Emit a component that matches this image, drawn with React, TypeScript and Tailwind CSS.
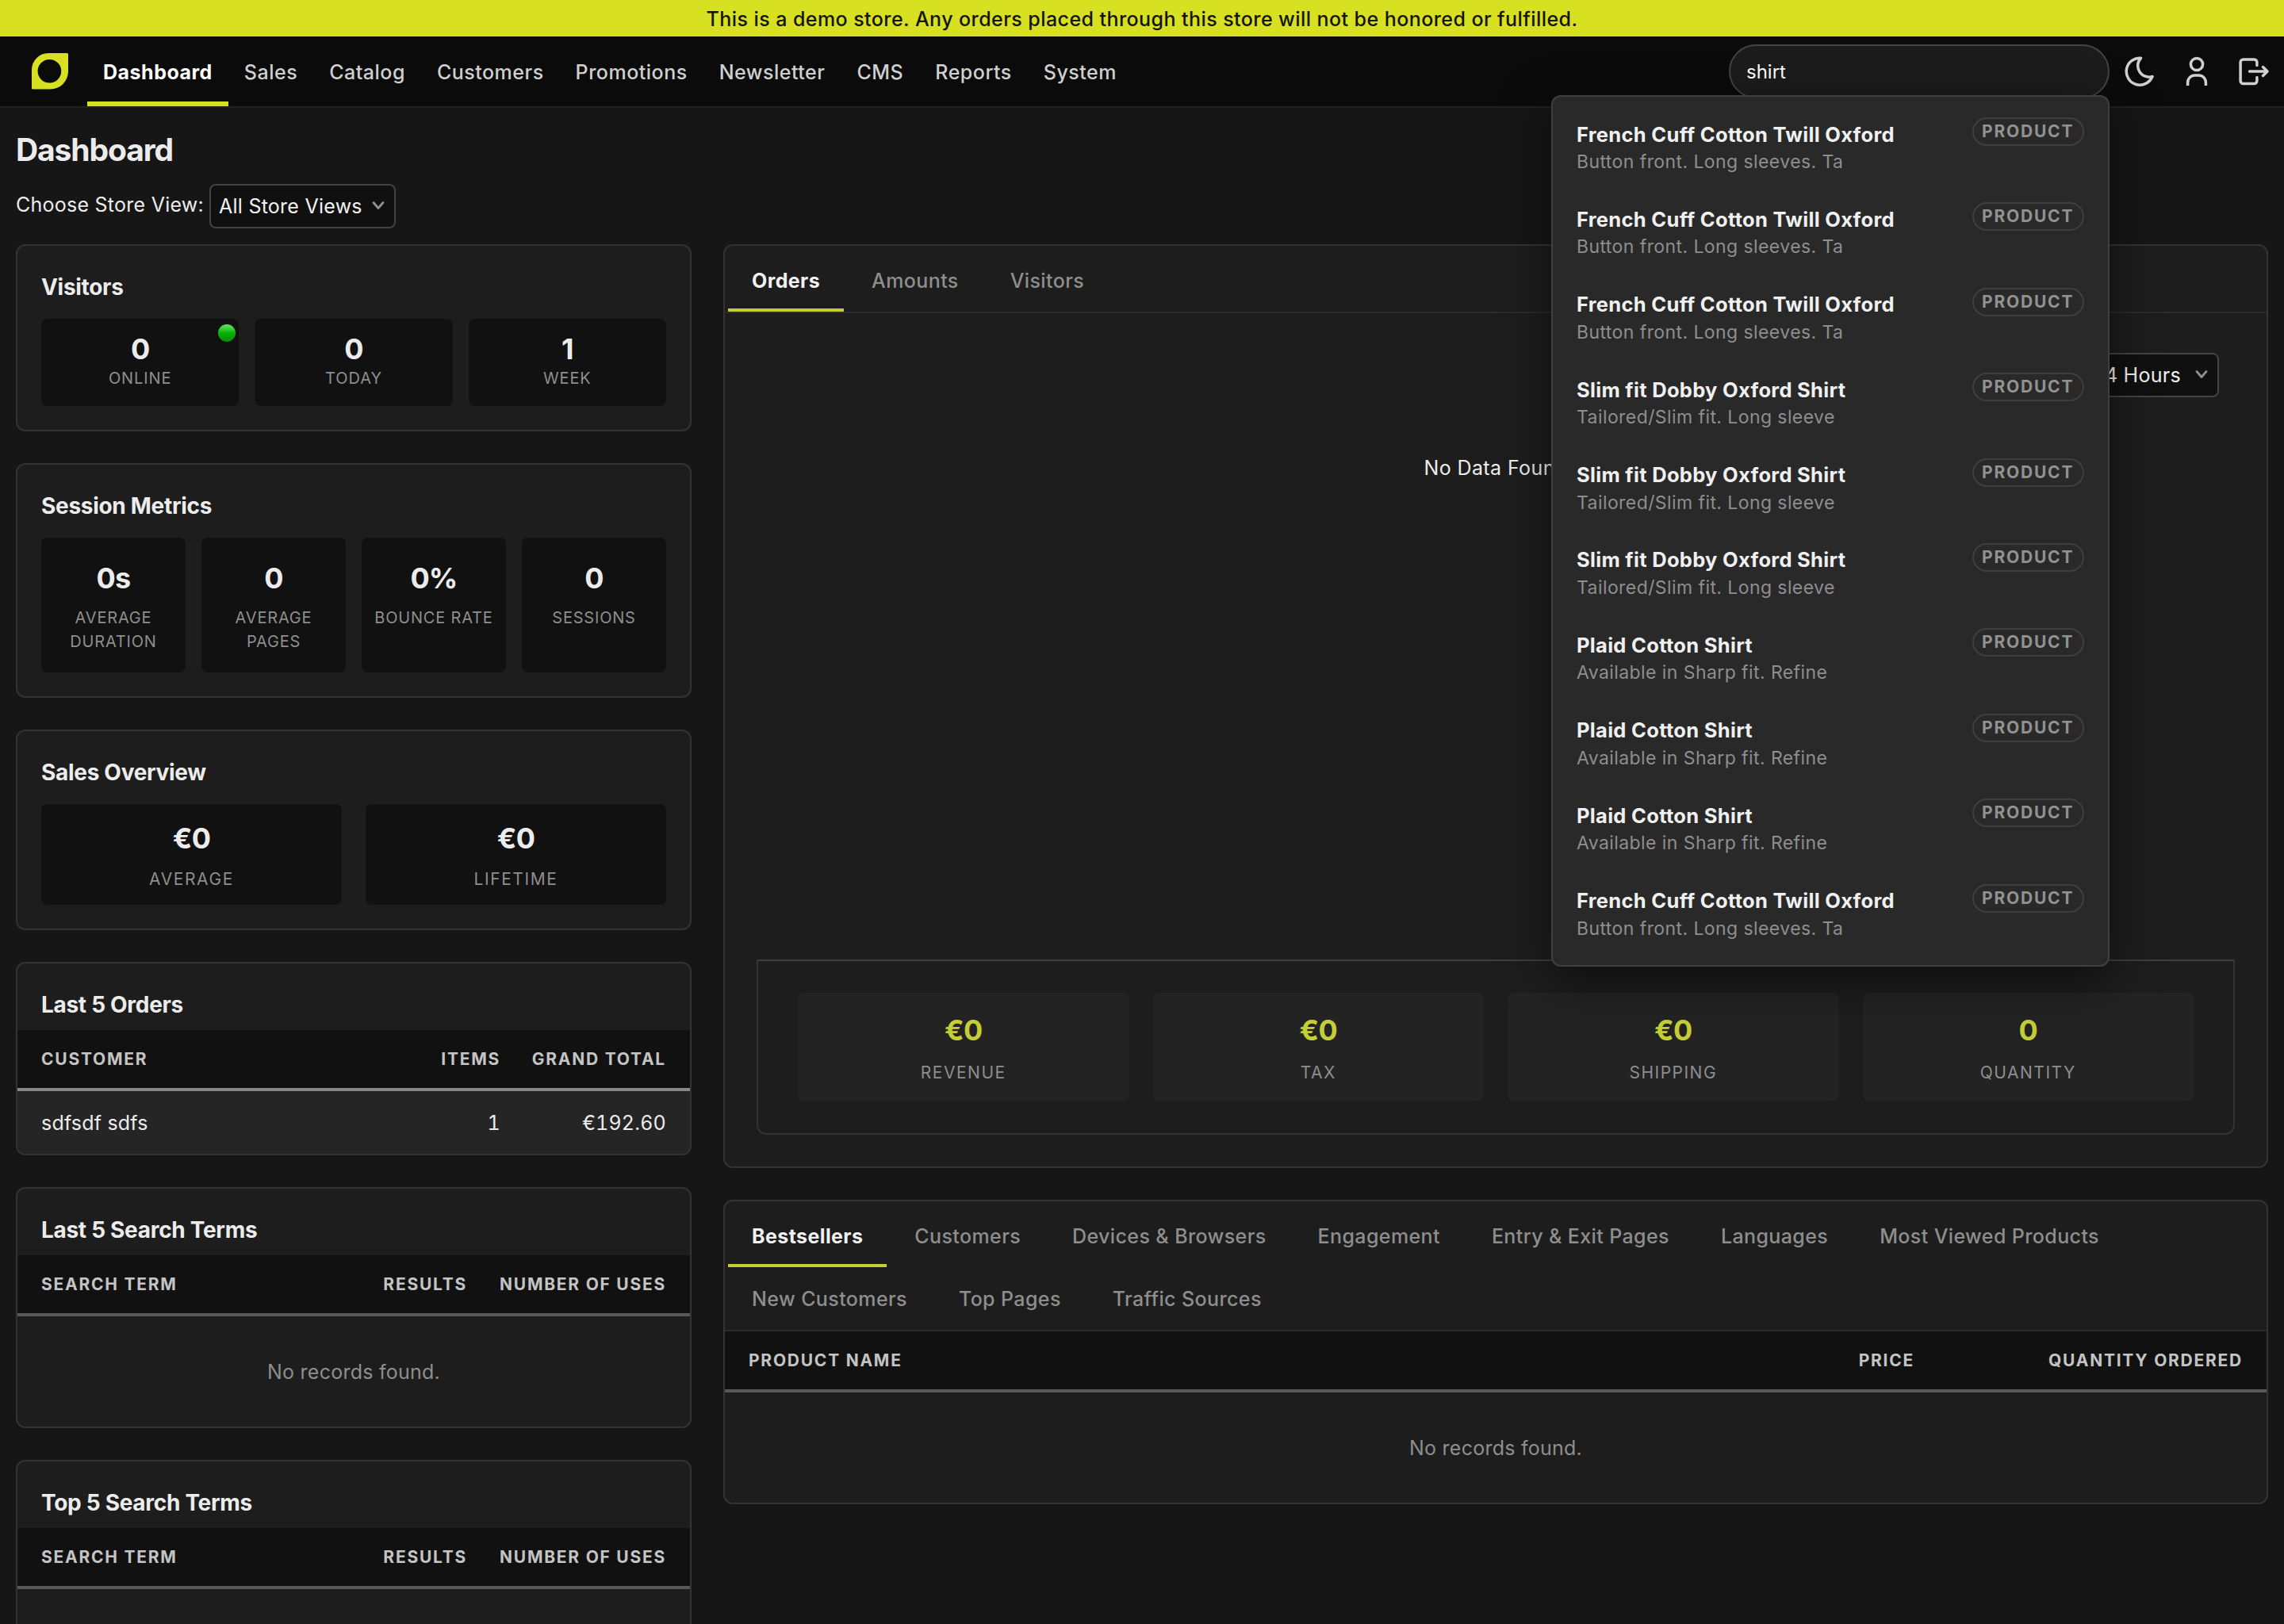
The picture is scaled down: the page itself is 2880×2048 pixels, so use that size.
import { clsx } from "clsx";

const NAV_ITEMS = ["Dashboard", "Sales", "Catalog", "Customers", "Promotions", "Newsletter", "CMS", "Reports", "System"];

const PRODUCTS = {
  oxford: { name: "French Cuff Cotton Twill Oxford", text: "Button front. Long sleeves. Ta" },
  dobby: { name: "Slim fit Dobby Oxford Shirt", text: "Tailored/Slim fit. Long sleeve" },
  plaid: { name: "Plaid Cotton Shirt", text: "Available in Sharp fit. Refine" },
};

const RESULTS = [
  PRODUCTS.oxford,
  PRODUCTS.oxford,
  PRODUCTS.oxford,
  PRODUCTS.dobby,
  PRODUCTS.dobby,
  PRODUCTS.dobby,
  PRODUCTS.plaid,
  PRODUCTS.plaid,
  PRODUCTS.plaid,
  PRODUCTS.oxford,
];

const REPORT_TABS = [
  ["Bestsellers", "Customers", "Devices & Browsers", "Engagement", "Entry & Exit Pages", "Languages", "Most Viewed Products"],
  ["New Customers", "Top Pages", "Traffic Sources"],
];

function Logo() {
  return (
    <svg width="46" height="46" viewBox="0 0 46 46" className="shrink-0">
      <path
        fill="#d7e021"
        fillRule="evenodd"
        d="M21 0H44.500Q46 0 46 1.500V23A22.500 22.500 0 0 1 23.500 45.500H1.500Q0 45.500 0 44V21A21 21 0 0 1 21 0ZM22.400 8A14.800 14.800 0 1 0 22.400 37.600A14.800 14.800 0 1 0 22.400 8Z"
      />
    </svg>
  );
}

function MoonIcon() {
  return (
    <svg width="40" height="40" viewBox="0 0 40 40" fill="none" stroke="#d0d0d0" strokeWidth="3.500" strokeLinejoin="round">
      <path d="M21.500 3.200A17 17 0 1 0 36 26.500A14.200 14.200 0 0 1 21.500 3.200Z" />
    </svg>
  );
}

function UserIcon() {
  return (
    <svg width="40" height="40" viewBox="0 0 40 40" fill="none" stroke="#d0d0d0" strokeWidth="3.500">
      <circle cx="20" cy="11" r="7.600" />
      <path d="M8.600 38V34a9 9 0 0 1 9-9h4.800a9 9 0 0 1 9 9v4" />
    </svg>
  );
}

function LogoutIcon() {
  return (
    <svg width="44" height="40" viewBox="0 0 44 40" fill="none" stroke="#d0d0d0" strokeWidth="3.500" strokeLinecap="round" strokeLinejoin="round">
      <path d="M25.900 12.400V8.500a3.500 3.500 0 0 0-3.500-3.500H8.600a3.500 3.500 0 0 0-3.500 3.500V32a3.500 3.500 0 0 0 3.500 3.500h13.800a3.500 3.500 0 0 0 3.500-3.500v-4.400" />
      <path d="M16.500 20H38.500M33.500 14.500 39 20 33.500 25.500" />
    </svg>
  );
}

function Select({ value, className }: { value: string; className?: string }) {
  return (
    <div
      className={clsx(
        "flex h-14 items-center justify-between rounded-lg border-2 border-[#444] bg-[#101010] pl-2.5 pr-[12px] text-[25px] tracking-[0.250px] text-[#f2f2f2]",
        className,
      )}
    >
      <span className="pt-px leading-[51px]">{value}</span>
      <svg width="16" height="12" viewBox="0 0 16 12" className="-mt-0.5" fill="none" stroke="#8f8f8f" strokeWidth="2.800" strokeLinecap="round" strokeLinejoin="round">
        <path d="M2 2.500 8 9.500 14 2.500" />
      </svg>
    </div>
  );
}

function SearchResults() {
  return (
    <div className="absolute right-0 top-16 z-10 h-[1099px] w-[704px] rounded-xl border-2 border-[#3f3f3f] bg-[#292929] px-[30px] pt-[26px] shadow-[0_16px_60px_rgba(0,0,0,0.5)]">
      {RESULTS.map((item, i) => (
        <div key={i} className="flex h-[107.400px] items-start justify-between">
          <div>
            <div className="mt-[3.500px] text-[25.500px] font-[650] leading-9 tracking-[0.300px] text-[#f0f0f0]">{item.name}</div>
            <div className="mt-[1.500px] text-[23px] leading-[30px] tracking-[0.420px] text-[#8e8e8e]">{item.text}</div>
          </div>
          <span className="h-9 w-[141px] rounded-full border-2 border-[#3f3f3f] pl-[10px] text-[21px] font-[650] leading-[31px] tracking-[1.800px] text-[#929292]">
            PRODUCT
          </span>
        </div>
      ))}
    </div>
  );
}

function Header() {
  return (
    <header className="flex h-[90px] items-center border-b-2 border-[#212121] bg-[#0b0b0b] pl-10 pr-4">
      <Logo />
      <nav className="ml-6 flex h-full">
        {NAV_ITEMS.map((item, i) => (
          <a
            key={item}
            className={clsx(
              "h-[88px] px-5 text-[25px] leading-[90px]",
              i === 0
                ? "border-b-[6px] border-[#d7e021] font-[650] tracking-[0.500px] text-white"
                : "font-[530] tracking-[0.500px] text-[#d0d0d0]",
            )}
          >
            {item}
          </a>
        ))}
      </nav>
      <div className="relative ml-auto">
        <div className="h-[68px] w-[480px] rounded-full border-2 border-[#444] bg-[#1c1c1c] pl-5 text-2xl leading-[65px] text-white">
          shirt
        </div>
        <SearchResults />
      </div>
      <div className="ml-[18px] flex items-center">
        <MoonIcon />
        <div className="ml-8">
          <UserIcon />
        </div>
        <div className="ml-[30px]">
          <LogoutIcon />
        </div>
      </div>
    </header>
  );
}

function Card({ title, children }: { title: string; children: React.ReactNode }) {
  return (
    <section className="overflow-hidden rounded-xl border-2 border-[#333] bg-[#1d1d1d] pt-8">
      <h2 className="px-[30px] text-[28px] font-[650] leading-10 tracking-[-0.300px] text-[#ececec]">{title}</h2>
      {children}
    </section>
  );
}

function Value({ children, className }: { children: string; className?: string }) {
  return <div className={clsx("text-4xl font-bold leading-[44px] tracking-[-0.800px]", className)}>{children}</div>;
}

function VisitorsCard() {
  return (
    <Card title="Visitors">
      <div className="grid grid-cols-3 gap-5 px-[30px] pb-[30px] pt-5">
        {[["0", "ONLINE"], ["0", "TODAY"], ["1", "WEEK"]].map(([value, label], i) => (
          <div key={label} className="relative h-[110px] rounded-lg bg-[#111] pt-4 text-center">
            <Value className="text-[#ececec]">{value}</Value>
            <div className="mt-0.5 text-xl leading-[26px] tracking-[0.900px] text-[#8e8e8e]">{label}</div>
            {i === 0 && (
              <span className="absolute right-1 top-[7px] size-[22px] rounded-full bg-linear-to-b from-[#5fe95f] via-[#06b806] via-45% to-[#068a06]" />
            )}
          </div>
        ))}
      </div>
    </Card>
  );
}

function SessionCard() {
  return (
    <Card title="Session Metrics">
      <div className="grid grid-cols-4 gap-5 px-[30px] pb-[30px] pt-5">
        {[["0s", "AVERAGE DURATION"], ["0", "AVERAGE PAGES"], ["0%", "BOUNCE RATE"], ["0", "SESSIONS"]].map(([value, label]) => (
          <div key={label} className="h-[170px] rounded-lg bg-[#111] px-3 pt-[29px] text-center">
            <Value className="text-[#ececec]">{value}</Value>
            <div className="mt-[13px] text-xl leading-[30px] tracking-[0.800px] text-[#8e8e8e]">{label}</div>
          </div>
        ))}
      </div>
    </Card>
  );
}

function SalesCard() {
  return (
    <Card title="Sales Overview">
      <div className="grid grid-cols-2 gap-[30px] px-[30px] pb-[30px] pt-5">
        {["AVERAGE", "LIFETIME"].map((label) => (
          <div key={label} className="h-[127px] rounded-lg bg-[#111] pt-[21px] text-center">
            <Value className="text-[#ececec]">€0</Value>
            <div className="mt-[15px] text-[21px] leading-[30px] tracking-[1.600px] text-[#8e8e8e]">{label}</div>
          </div>
        ))}
      </div>
    </Card>
  );
}

type TableProps = {
  columns: string[];
  grid: string;
  rows?: string[][];
};

function Table({ columns, grid, rows }: TableProps) {
  return (
    <div>
      <div
        className={clsx(
          "grid h-[77px] border-b-4 bg-[#111] px-[30px] text-[21px] font-[650] leading-[73px] tracking-[1.750px] text-[#c4c4c4]",
          rows ? "border-[#888]" : "border-[#585858]",
          grid,
        )}
      >
        {columns.map((column, i) => (
          <div key={column} className={clsx(i > 0 && "text-right")}>{column}</div>
        ))}
      </div>
      {rows ? (
        rows.map((row) => (
          <div
            key={row[0]}
            className={clsx("grid h-[79px] bg-[#252525] px-[30px] text-[25px] leading-[80px] tracking-[0.200px] text-[#ececec]", grid)}
          >
            {row.map((cell, i) => (
              <div key={i} className={clsx(i > 0 && "text-right tabular-nums")}>{cell}</div>
            ))}
          </div>
        ))
      ) : (
        <div className="h-[139px] text-center text-[25px] leading-[140px] tracking-[0.250px] text-[#8e8e8e]">No records found.</div>
      )}
    </div>
  );
}

function TableCard({ title, ...table }: TableProps & { title: string }) {
  return (
    <Card title={title}>
      <div className="mt-3">
        <Table {...table} />
      </div>
    </Card>
  );
}

function Tabs({ rows }: { rows: string[][] }) {
  return (
    <div className="border-b-2 border-[#2b2b2b] pl-1">
      {rows.map((row, r) => (
        <div key={r} className={clsx("flex gap-[5px]", r > 0 && "-mt-1")}>
          {row.map((tab, i) => (
            <div
              key={tab}
              className={clsx(
                "h-[83px] border-b-4 px-[30px] text-[25px] leading-[88px]",
                r === 0 && i === 0
                  ? "border-[#c5cf35] font-[650] tracking-[0.400px] text-[#f2f2f2]"
                  : "border-transparent font-[530] tracking-[0.390px] text-[#8e8e8e]",
              )}
            >
              {tab}
            </div>
          ))}
        </div>
      ))}
    </div>
  );
}

function ChartCard() {
  return (
    <section className="flex h-[1165px] flex-col rounded-xl border-2 border-[#333] bg-[#1d1d1d]">
      <Tabs rows={[["Orders", "Amounts", "Visitors"]]} />
      <div className="flex justify-end pr-[60px] pt-[50px]">
        <Select value="Last 24 Hours" className="w-[229px]" />
      </div>
      <p className="mt-[69px] text-center text-[25px] leading-10 tracking-[0.400px] text-[#ececec]">No Data Found</p>
      <div className="mx-10 mb-10 mt-auto grid grid-cols-4 gap-[30px] rounded-b-xl border-2 border-[#333] border-t-[#3d3d3d] px-[50px] py-10">
        {[["€0", "REVENUE"], ["€0", "TAX"], ["€0", "SHIPPING"], ["0", "QUANTITY"]].map(([value, label]) => (
          <div key={label} className="h-[137px] rounded-lg bg-[#232323] pt-[25px] text-center">
            <Value className="text-[#c5cf35]">{value}</Value>
            <div className="mt-[17px] text-[21px] leading-[30px] tracking-[1.500px] text-[#8e8e8e]">{label}</div>
          </div>
        ))}
      </div>
    </section>
  );
}

export default function App() {
  return (
    <div className="h-[2048px] w-[2880px] overflow-hidden bg-[#161616] font-['Inter',sans-serif]">
      <div className="h-[46px] bg-[#d7e021] text-center text-[25px] font-medium leading-[48px] tracking-[0.430px] text-[#141400]">
        This is a demo store. Any orders placed through this store will not be honored or fulfilled.
      </div>
      <Header />
      <main className="px-5 pt-[29px]">
        <h1 className="text-[39px] font-[670] leading-[48px] tracking-[-1.100px] text-[#ececec]">Dashboard</h1>
        <div className="mt-[19px] flex items-start">
          <label className="w-[244px] whitespace-nowrap text-[25px] leading-[52px] tracking-[0.250px] text-[#ececec]">Choose Store View:</label>
          <Select value="All Store Views" className="w-[235px]" />
        </div>
        <div className="mt-5 flex gap-10">
          <div className="flex w-[852px] shrink-0 flex-col gap-10">
            <VisitorsCard />
            <SessionCard />
            <SalesCard />
            <TableCard
              title="Last 5 Orders"
              columns={["CUSTOMER", "ITEMS", "GRAND TOTAL"]}
              grid="grid-cols-[1fr_120px_209px]"
              rows={[["sdfsdf sdfs", "1", "€192.60"]]}
            />
            <TableCard title="Last 5 Search Terms" columns={["SEARCH TERM", "RESULTS", "NUMBER OF USES"]} grid="grid-cols-[1fr_150px_251px]" />
            <TableCard title="Top 5 Search Terms" columns={["SEARCH TERM", "RESULTS", "NUMBER OF USES"]} grid="grid-cols-[1fr_150px_251px]" />
          </div>
          <div className="flex flex-1 flex-col gap-10">
            <ChartCard />
            <section className="overflow-hidden rounded-xl border-2 border-[#333] bg-[#1d1d1d]">
              <Tabs rows={REPORT_TABS} />
              <Table columns={["PRODUCT NAME", "PRICE", "QUANTITY ORDERED"]} grid="grid-cols-[1fr_200px_414px]" />
            </section>
          </div>
        </div>
      </main>
    </div>
  );
}
